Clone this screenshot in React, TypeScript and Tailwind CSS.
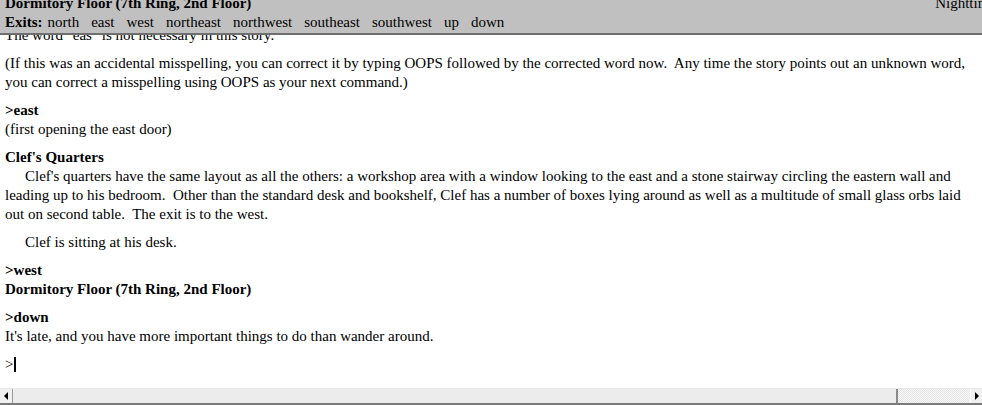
import React from 'react';

const exits = ['north', 'east', 'west', 'northeast', 'northwest', 'southeast', 'southwest', 'up', 'down'];

const serif = 'font-["Liberation_Serif","Times_New_Roman",serif]';

const Scrollbar: React.FC = () => (
  <div className="flex h-[17px] w-full shrink-0 border-t border-[#e8e8e8] border-b-2 border-b-[#7a7a7a] bg-[#f4f4f4]">
    <div className="flex h-full w-[13px] items-center justify-center border-r border-[#9a9a9a] bg-[#f0f0f0]">
      <svg width="5" height="8" viewBox="0 0 5 8">
        <path d="M4 0 L0 4 L4 8 Z" fill="#000" />
      </svg>
    </div>
    <div className="h-full w-[885px] border-r-2 border-[#8a8a8a] bg-[#ececec]" />
    <div className="h-full flex-1 bg-[repeating-conic-gradient(#e4e4e4_0_25%,#f8f8f8_0_50%)] bg-[length:2px_2px]" />
    <div className="flex h-full w-[12px] items-center justify-center border-l border-white bg-[#f0f0f0]">
      <svg width="5" height="8" viewBox="0 0 5 8">
        <path d="M1 0 L5 4 L1 8 Z" fill="#000" />
      </svg>
    </div>
  </div>
);

const App: React.FC = () => {
  return (
    <div className={`relative flex h-[405px] w-[982px] flex-col overflow-hidden bg-white text-[15px] leading-[19px] text-black ${serif}`}>
      {/* status line over the scrolled text */}
      <div className="absolute left-0 right-0 top-0 z-10 h-[35px] overflow-hidden border-b-2 border-[#6e6e6e] bg-[#c0c0c0]">
        <div className="-mt-[6px] flex pl-[5px]">
          <span className="font-bold">Dormitory Floor (7th Ring, 2nd Floor)</span>
          <span className="-mr-[14px] ml-auto shrink-0">Nighttime</span>
        </div>
        <div className="flex pl-[5px]">
          <span className="mr-[5px] font-bold">Exits:</span>
          {exits.map((e) => (
            <span key={e} className="mr-[12px]">{e}</span>
          ))}
        </div>
      </div>

      <div className="flex flex-1 flex-col gap-[9px] overflow-hidden whitespace-pre px-[5px] pt-[26px]">
        <p>The word &quot;eas&quot; is not necessary in this story.</p>
        <p>
          (If this was an accidental misspelling, you can correct it by typing OOPS followed by the corrected word now.  Any time the story points out an unknown word,
          <br />
          you can correct a misspelling using OOPS as your next command.)
        </p>
        <div>
          <p className="font-bold">&gt;east</p>
          <p>(first opening the east door)</p>
        </div>
        <div>
          <p className="font-bold">Clef's Quarters</p>
          <p>
            <span className="pl-[20px]">Clef's quarters have the same layout as all the others: a workshop area with a window looking to the east and a stone stairway circling the eastern wall and</span>
            <br />
            leading up to his bedroom.  Other than the standard desk and bookshelf, Clef has a number of boxes lying around as well as a multitude of small glass orbs laid
            <br />
            out on second table.  The exit is to the west.
          </p>
        </div>
        <p className="pl-[20px]">Clef is sitting at his desk.</p>
        <div>
          <p className="font-bold">&gt;west</p>
          <p className="font-bold">Dormitory Floor (7th Ring, 2nd Floor)</p>
        </div>
        <div>
          <p className="font-bold">&gt;down</p>
          <p>It's late, and you have more important things to do than wander around.</p>
        </div>
        <p className="flex items-center">
          &gt;<span className="ml-[1px] inline-block h-[15px] w-[2px] bg-black" />
        </p>
      </div>

      <Scrollbar />
    </div>
  );
};

export default App;
